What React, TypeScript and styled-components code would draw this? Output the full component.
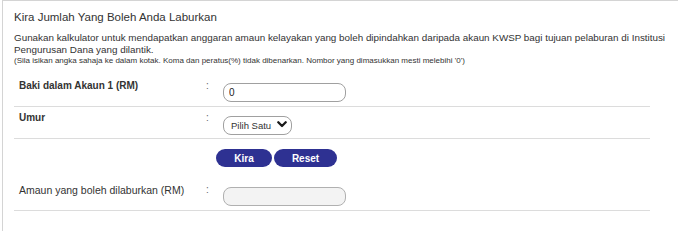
import styled, { createGlobalStyle } from 'styled-components'

const GlobalStyle = createGlobalStyle`
  html, body {
    margin: 0;
    padding: 0;
    background: #fff;
  }
  body {
    font-family: 'Liberation Sans', Arial, sans-serif;
    color: #333;
  }
`

const Frame = styled.div`
  box-sizing: border-box;
  margin-left: 2px;
  min-height: 100vh;
  padding: 9px 0 0 11px;
  border-top: 1px solid #d4d4d4;
  border-left: 1px solid #d4d4d4;
`

const Title = styled.h3`
  margin: 0 0 8px;
  font-size: 11.5px;
  line-height: 14px;
  font-weight: normal;
  color: #333;
`

const Intro = styled.p`
  margin: 0;
  font-size: 9.85px;
  line-height: 12px;
  color: #333;
`

const Note = styled.span`
  display: block;
  font-size: 8px;
  line-height: 10px;
`

const Form = styled.div`
  margin: 9px 28px 0 0;
`

const Row = styled.div`
  display: grid;
  grid-template-columns: 187px 17px 1fr;
  padding: 4px 0 4px 5px;
  border-bottom: 1px solid #dcdcdc;
`

const Label = styled.label<{ $bold?: boolean }>`
  font-size: ${p => (p.$bold ? '10px' : '10.5px')};
  font-weight: ${p => (p.$bold ? 'bold' : 'normal')};
  line-height: 14px;
  color: #333;
`

const Colon = styled.span`
  font-size: 10px;
  line-height: 13px;
  color: #666;
`

const Field = styled.div`
  margin-top: 4px;
`

const TextInput = styled.input<{ $readOnly?: boolean }>`
  box-sizing: border-box;
  display: block;
  width: 123px;
  height: 19px;
  margin: 0;
  padding: 0 5px;
  font-family: inherit;
  font-size: 10px;
  color: #222;
  background: ${p => (p.$readOnly ? '#f3f3f3' : '#fff')};
  border: 1px solid ${p => (p.$readOnly ? '#b0b0b0' : '#a0a0a0')};
  border-radius: 8px;
  outline: none;
`

const SelectWrap = styled.div`
  position: relative;
  width: 69px;
  height: 19px;
`

const Select = styled.select`
  box-sizing: border-box;
  appearance: none;
  width: 100%;
  height: 100%;
  margin: 0;
  padding: 0 0 0 7px;
  font-family: inherit;
  font-size: 9.5px;
  color: #333;
  background: #fff;
  border: 1px solid #a0a0a0;
  border-radius: 8px;
  outline: none;
`

const Chevron = styled.svg`
  position: absolute;
  right: 5px;
  top: 6px;
  pointer-events: none;
`

const ButtonRow = styled.div`
  display: flex;
  gap: 2px;
  padding: 10px 0 12px 202px;
`

const Button = styled.button<{ $width: number }>`
  width: ${p => p.$width}px;
  height: 18px;
  padding: 0;
  font-family: inherit;
  font-size: 10px;
  font-weight: bold;
  color: #fff;
  background: #2e3192;
  border: none;
  border-radius: 9px;
  cursor: pointer;
`

export default function App() {
  return (
    <>
      <GlobalStyle />
      <Frame>
        <Title>Kira Jumlah Yang Boleh Anda Laburkan</Title>
        <Intro>
          Gunakan kalkulator untuk mendapatkan anggaran amaun kelayakan yang boleh dipindahkan daripada akaun KWSP bagi tujuan pelaburan di Institusi Pengurusan Dana yang dilantik.
          <Note>(Sila isikan angka sahaja ke dalam kotak. Koma dan peratus(%) tidak dibenarkan. Nombor yang dimasukkan mesti melebihi '0')</Note>
        </Intro>
        <Form>
          <Row>
            <Label $bold>Baki dalam Akaun 1 (RM)</Label>
            <Colon>:</Colon>
            <Field>
              <TextInput defaultValue="0" />
            </Field>
          </Row>
          <Row>
            <Label $bold>Umur</Label>
            <Colon>:</Colon>
            <Field>
              <SelectWrap>
                <Select defaultValue="">
                  <option value="">Pilih Satu</option>
                </Select>
                <Chevron width="10" height="7" viewBox="0 0 10 7">
                  <polyline points="1.3,1.3 5,5 8.7,1.3" fill="none" stroke="#1a1a1a" strokeWidth="2.3" strokeLinecap="round" strokeLinejoin="round" />
                </Chevron>
              </SelectWrap>
            </Field>
          </Row>
          <ButtonRow>
            <Button $width={56}>Kira</Button>
            <Button $width={63}>Reset</Button>
          </ButtonRow>
          <Row>
            <Label>Amaun yang boleh dilaburkan (RM)</Label>
            <Colon>:</Colon>
            <Field>
              <TextInput $readOnly readOnly />
            </Field>
          </Row>
        </Form>
      </Frame>
    </>
  )
}
